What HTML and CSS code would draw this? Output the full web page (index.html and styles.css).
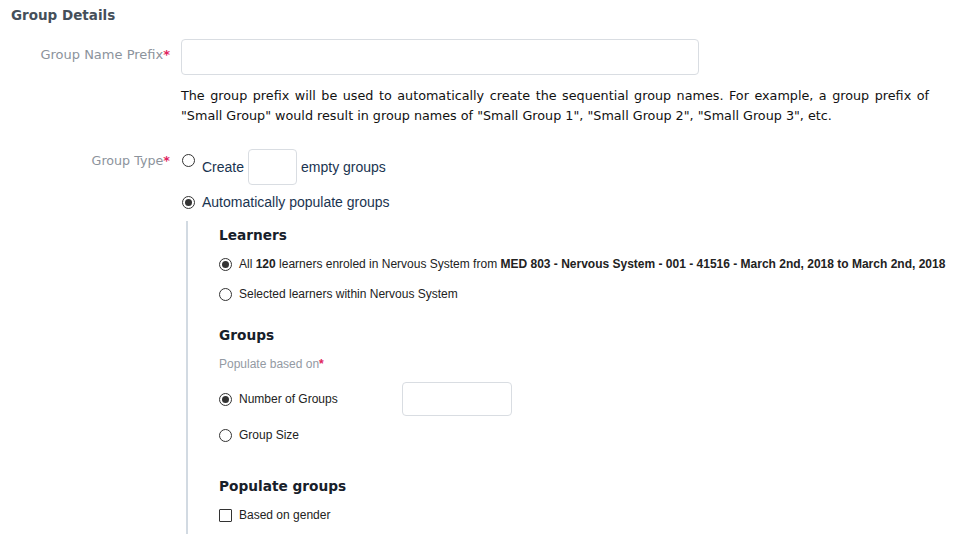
FILE: index.html
```html
<!DOCTYPE html>
<html>
<head>
<meta charset="utf-8">
<link rel="stylesheet" href="styles.css">
</head>
<body>
<div class="page">
  <h2 class="section-title">Group Details</h2>

  <div class="row row-prefix">
    <label class="row-label">Group Name Prefix<span class="req">*</span></label>
    <div class="row-body">
      <input type="text" class="text-input prefix-input">
      <p class="help">The group prefix will be used to automatically create the sequential group names. For example, a group prefix of "Small Group" would result in group names of "Small Group 1", "Small Group 2", "Small Group 3", etc.</p>
    </div>
  </div>

  <div class="row row-type">
    <label class="row-label type-label">Group Type<span class="req">*</span></label>
    <div class="row-body">
      <div class="opt opt-create">
        <input type="radio" name="gt" class="radio radio-top">
        <span class="opt-text">Create</span>
        <input type="text" class="text-input small-input">
        <span class="opt-text">empty groups</span>
      </div>
      <div class="opt opt-auto">
        <input type="radio" name="gt" class="radio" checked>
        <span class="opt-text">Automatically populate groups</span>
      </div>

      <div class="nested">
        <h3 class="sub-title">Learners</h3>
        <div class="choice">
          <input type="radio" name="lr" class="radio" checked>
          <span>All <b>120</b> learners enroled in Nervous System from <b>MED 803 - Nervous System - 001 - 41516 - March 2nd, 2018 to March 2nd, 2018</b></span>
        </div>
        <div class="choice">
          <input type="radio" name="lr" class="radio">
          <span>Selected learners within Nervous System</span>
        </div>

        <h3 class="sub-title groups-title">Groups</h3>
        <div class="hint">Populate based on<span class="req">*</span></div>
        <div class="choice choice-num">
          <input type="radio" name="pb" class="radio" checked>
          <span class="num-label">Number of Groups</span>
          <input type="text" class="text-input num-input">
        </div>
        <div class="choice choice-size">
          <input type="radio" name="pb" class="radio">
          <span>Group Size</span>
        </div>

        <h3 class="sub-title populate-title">Populate groups</h3>
        <div class="choice choice-check">
          <input type="checkbox" class="check">
          <span>Based on gender</span>
        </div>
      </div>
    </div>
  </div>
</div>
</body>
</html>
```

FILE: styles.css
```css
* { box-sizing: border-box; }
html, body { margin: 0; padding: 0; background: #fff; }
body {
  font-family: "DejaVu Sans", Verdana, sans-serif;
  color: #222;
}
.page { padding: 6px 0 0 11px; width: 966px; }

.section-title {
  margin: 0;
  font-size: 13.5px;
  font-weight: bold;
  color: #454f5a;
  line-height: 18px;
}

.row {
  display: grid;
  grid-template-columns: 159px 1fr;
  column-gap: 11px;
}
.row-label {
  text-align: right;
  font-size: 13px;
  color: #8c939c;
  line-height: 16px;
}
.type-label { font-size: 12.7px; }
.req { color: #e0245e; font-weight: bold; }

.row-prefix { margin-top: 15px; }
.row-prefix .row-label { padding-top: 8px; }

.text-input {
  border: 1px solid #d9dde2;
  border-radius: 4px;
  height: 36px;
  background: #fff;
  outline: none;
  padding: 0;
  margin: 0;
}
.prefix-input { width: 518px; display: block; }

.help {
  margin: 11px 0 0 0;
  width: 748px;
  font-size: 12.75px;
  line-height: 20px;
  text-align: justify;
  color: #111;
}

.row-type { margin-top: 24px; }
.type-label { padding-top: 3px; }

.radio {
  appearance: none;
  -webkit-appearance: none;
  width: 13px;
  height: 13px;
  border: 1px solid #333;
  border-radius: 50%;
  margin: 0;
  background: #fff;
  position: relative;
  flex: none;
}
.radio:checked::after {
  content: "";
  position: absolute;
  left: 2px; top: 2px;
  width: 7px; height: 7px;
  border-radius: 50%;
  background: #333;
}

.opt {
  display: flex;
  align-items: center;
  font-family: "Liberation Sans", Arial, sans-serif;
  font-size: 14px;
  color: #1a3450;
}
.opt-create { align-items: flex-start; margin-top: -1px; }
.opt-create .radio { margin: 5px 7px 0 1px; }
.opt-create .opt-text { margin-top: 10px; }
.small-input { width: 49px; height: 36px; margin: 0 4px 0 4px; }
.opt-auto { margin-top: 9px; }
.opt-auto .radio { margin: 0 7px 0 1px; }

.nested {
  margin: 11px 0 0 5px;
  border-left: 2px solid #d2dae2;
  padding: 5px 0 12px 31px;
}

.sub-title {
  margin: 0;
  font-size: 13.7px;
  font-weight: bold;
  color: #17202a;
  line-height: 18px;
}

.choice {
  display: flex;
  align-items: center;
  font-family: "Liberation Sans", Arial, sans-serif;
  font-size: 12px;
  color: #222;
  line-height: 14px;
}
.choice .radio { margin-right: 7px; }
.sub-title + .choice { margin-top: 13px; }
.choice + .choice { margin-top: 16px; }

.groups-title { margin-top: 25px; }
.hint {
  margin-top: 13px;
  font-family: "Liberation Sans", Arial, sans-serif;
  font-size: 12px;
  color: #939aa3;
}
.choice-num { margin-top: 11px; }
.num-label { width: 163px; }
.num-input { width: 110px; height: 34px; }
.choice-num + .choice-size { margin-top: 12px; }

.populate-title { margin-top: 35px; }
.check {
  appearance: none;
  -webkit-appearance: none;
  width: 13px; height: 13px;
  border: 1px solid #333;
  border-radius: 1px;
  margin: 0 7px 0 0;
  background: #fff;
}
.choice-check { margin-top: 12px; }
```
